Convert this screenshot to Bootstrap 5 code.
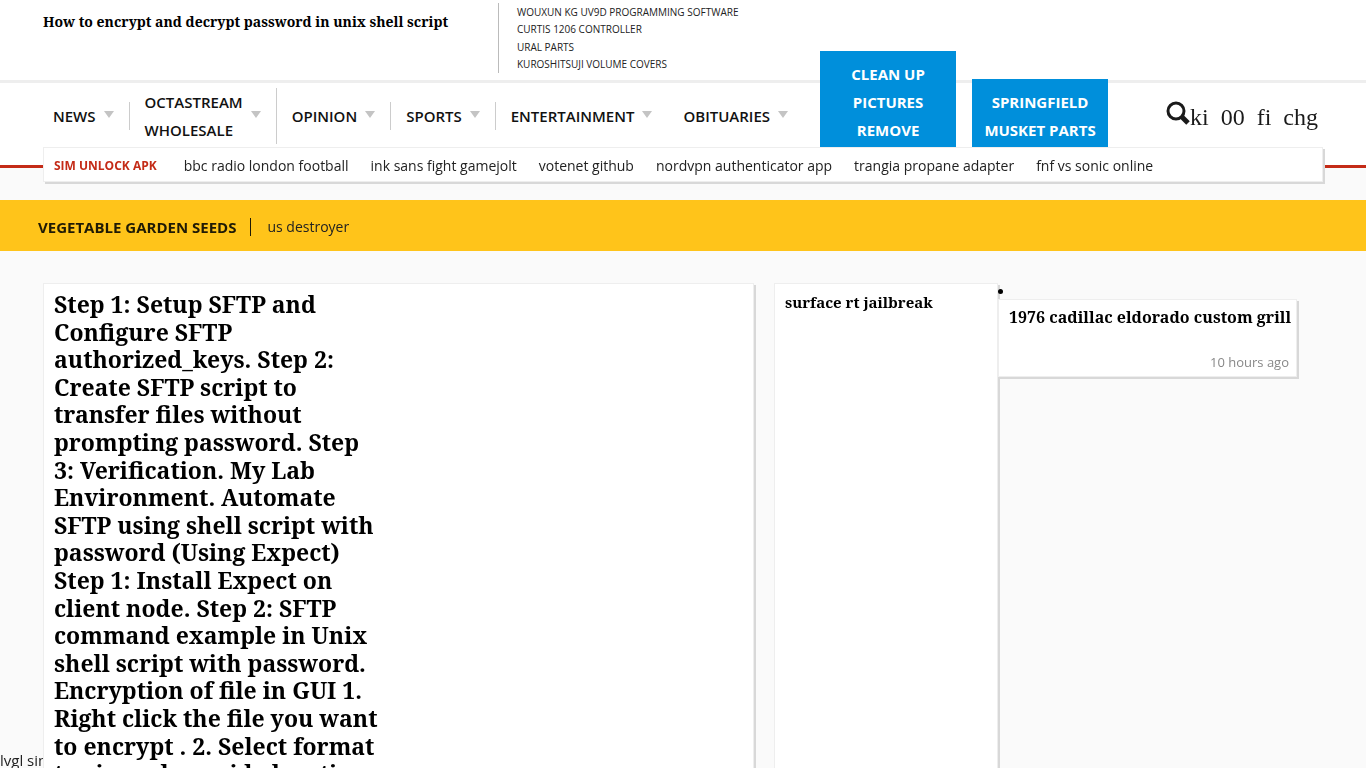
<!DOCTYPE html>
<html lang="en">
<head>
<meta charset="utf-8">
<meta name="viewport" content="width=device-width, initial-scale=1">
<title>How to encrypt and decrypt password in unix shell script</title>
<link href="https://cdn.jsdelivr.net/npm/bootstrap@5.3.0/dist/css/bootstrap.min.css" rel="stylesheet">
<style>
  body { background: #fafafa; color: #222; font-family: "Open Sans", sans-serif; font-size: 14px; }
  a { color: inherit; text-decoration: none; }
  .wrap { width: 100%; max-width: 1280px; margin: 0 auto; }
  .serif-head { font-family: "Noto Serif", "Liberation Serif", serif; font-weight: 700; color: #000; margin: 0; }

  .masthead { background: #fff; border-bottom: 3px solid #eee; height: 83px; }
  .masthead .wrap { padding-top: 3px; }
  .site-title { width: 455px; font-size: 14px; line-height: 37px; }
  .top-links { border-left: 1px solid #bbb; padding: 1px 0 0 18px; height: 70px; font-size: 10px; line-height: 17px; }

  .mainnav { background: #fff; height: 64px; }
  .mainnav .menu-item { display: flex; align-items: center; gap: 8px; padding: 0 15px; border-right: 1px solid #ccc;
    font-size: 15px; font-weight: 600; line-height: 28px; color: #111; }
  .mainnav .menu-item:first-child { padding-left: 10px; }
  .mainnav .open-end { border-right-color: transparent; }
  .menu-item::after { content: ""; margin-bottom: 4px; border: 5px solid transparent; border-top: 7px solid #c4c4c4; border-bottom: 0; }
  .menu-list { padding-top: 2px; }
  .promo { width: 136px; padding: 9px 8px 3px; background: #008fdb; color: #fff; font-size: 15px; font-weight: 700; line-height: 28px; text-align: center; }
  .glyph-links { font-family: "Liberation Serif", serif; font-size: 24px; line-height: 28px; color: #1a1a1a; gap: 12px; padding: 4px 5px 0 0; }

  .ticker { height: 53px; background: linear-gradient(#fff 18px, #c42b17 18px, #c42b17 21px, #fafafa 21px); }
  .panel { background: #fff; border: 1px solid #eee; box-shadow: 2px 2px 0 #d8d8d8; }
  .ticker .panel { height: 35px; padding: 2px 10px 0; gap: 22px; line-height: 35px; }
  .ticker strong { color: #c42b17; font-size: 12px; margin-right: 5px; }

  .alertbar { background: #ffc41a; height: 51px; padding-top: 2px; }
  .alertbar .wrap { max-width: 1290px; }
  .alertbar strong { font-size: 15px; line-height: 18px; color: #1f1a05; padding-right: 14px; border-right: 1px solid #1f1a05; margin-right: 16px; }

  .board { display: grid; grid-template-columns: 731fr 224fr minmax(0, 325fr); padding-top: 32px; }
  .lead-story { margin-right: 20px; padding: 7px 10px; }
  .lead-story h2 { max-width: 325px; font-size: 23px; line-height: 1.2; }
  .second { padding: 6px 10px; }
  .second h3 { font-size: 15px; line-height: 24px; }
  .third { z-index: 1; }
  .third .dot { width: 5px; height: 5px; margin: 6px 0 5px; background: #000; }
  .third .panel { margin-right: 26px; height: 78px; padding: 5px 7px 5px 10px; }
  .third h3 { font-size: 16px; line-height: 24px; white-space: nowrap; }
  .third time { color: #888; font-size: 13px; line-height: 18px; }
  .skip-note { z-index: -1; font-size: 15px; line-height: 15px; }
</style>
<script defer src="https://cdn.jsdelivr.net/npm/bootstrap@5.3.0/dist/js/bootstrap.bundle.min.js"></script>
</head>
<body>
<header class="masthead">
  <div class="wrap d-flex">
    <h1 class="site-title serif-head">How to encrypt and decrypt password in unix shell script</h1>
    <ul class="top-links list-unstyled d-flex flex-column justify-content-between mb-0 text-uppercase">
      <li><a href="#">Wouxun kg uv9d programming software</a></li>
      <li><a href="#">Curtis 1206 controller</a></li>
      <li><a href="#">Ural parts</a></li>
      <li><a href="#">Kuroshitsuji volume covers</a></li>
    </ul>
  </div>
</header>

<nav class="mainnav">
  <div class="wrap d-flex h-100 justify-content-between">
    <div class="menu-list d-flex align-items-center">
      <a class="menu-item" href="#">NEWS</a>
      <a class="menu-item" href="#"><span>OCTASTREAM<br>WHOLESALE</span></a>
      <a class="menu-item" href="#">OPINION</a>
      <a class="menu-item" href="#">SPORTS</a>
      <a class="menu-item open-end" href="#">ENTERTAINMENT</a>
      <a class="menu-item open-end" href="#">OBITUARIES</a>
      <div class="d-flex align-items-end align-self-end gap-3 ms-3">
        <a class="promo" href="#">CLEAN UP<br>PICTURES<br>REMOVE</a>
        <a class="promo px-0" href="#">SPRINGFIELD<br>MUSKET PARTS</a>
      </div>
    </div>
    <div class="glyph-links d-flex align-items-center">
      <a class="d-flex align-items-center" href="#" aria-label="Search">
        <svg class="mb-2" width="24" height="24" viewBox="0 0 24 24" fill="none" stroke="#1a1a1a" aria-hidden="true"><circle cx="10" cy="10" r="8" stroke-width="3"/><path d="M16 16l6 6" stroke-width="5"/></svg>ki</a>
      <a href="#">00</a>
      <a href="#">fi</a>
      <a href="#">chg</a>
    </div>
  </div>
</nav>

<div class="ticker">
  <div class="wrap panel d-flex align-items-center">
    <strong>SIM UNLOCK APK</strong>
    <a href="#">bbc radio london football</a>
    <a href="#">ink sans fight gamejolt</a>
    <a href="#">votenet github</a>
    <a href="#">nordvpn authenticator app</a>
    <a href="#">trangia propane adapter</a>
    <a href="#">fnf vs sonic online</a>
  </div>
</div>

<div class="alertbar d-flex align-items-center">
  <div class="wrap d-flex align-items-center">
    <strong>VEGETABLE GARDEN SEEDS</strong>
    <a href="#">us destroyer</a>
  </div>
</div>

<main class="wrap board">
  <article class="lead-story panel">
    <h2 class="serif-head">Step 1: Setup SFTP and Configure SFTP authorized_keys. Step 2: Create SFTP script to transfer files without prompting password. Step 3: Verification. My Lab Environment. Automate SFTP using shell script with password (Using Expect) Step 1: Install Expect on client node. Step 2: SFTP command example in Unix shell script with password. Encryption of file in GUI 1. Right click the file you want to encrypt . 2. Select format to zip and provide location</h2>
  </article>
  <article class="second panel">
    <h3 class="serif-head">surface rt jailbreak</h3>
  </article>
  <div class="third">
    <div class="dot rounded-circle"></div>
    <article class="panel d-flex flex-column justify-content-between">
      <h3 class="serif-head">1976 cadillac eldorado custom grill</h3>
      <time class="text-end">10 hours ago</time>
    </article>
  </div>
</main>
<a class="skip-note position-fixed bottom-0 start-0" href="#">lvgl sim</a>
</body>
</html>
